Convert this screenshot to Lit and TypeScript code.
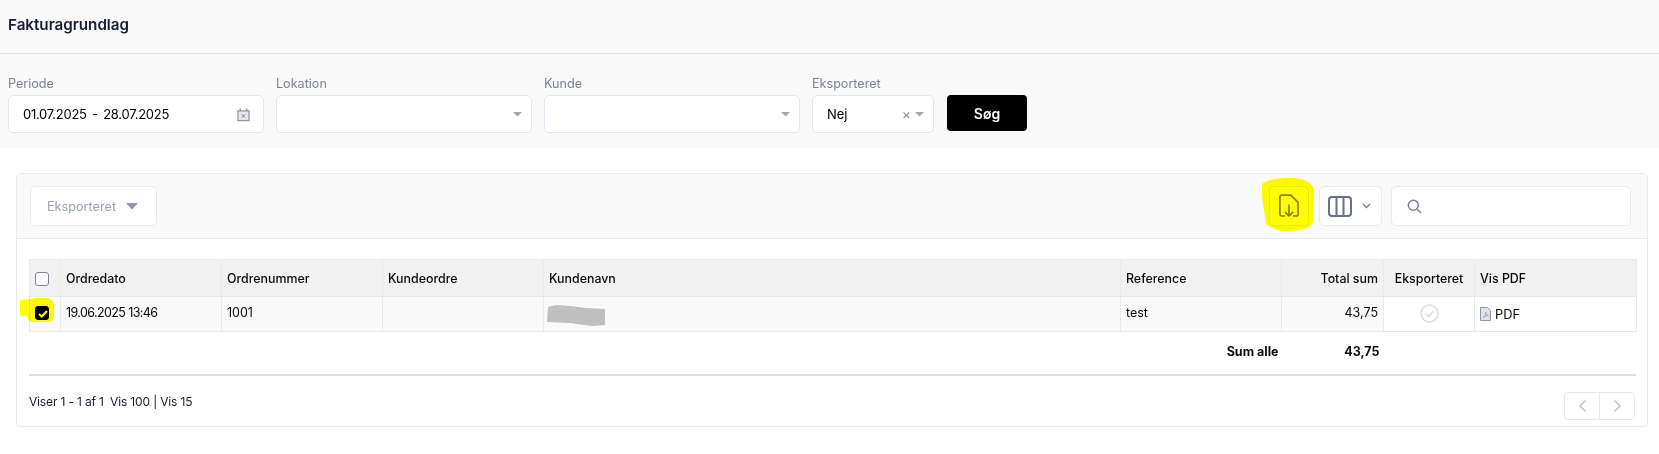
import { LitElement, html, css } from "lit";
import { customElement } from "lit/decorators.js";

const caret = html`<svg class="caret" width="9" height="5" viewBox="0 0 10 6" preserveAspectRatio="none"><path d="M0 0h10L5 5.500z" fill="currentColor"/></svg>`;

@customElement("app-root")
export class AppRoot extends LitElement {
  static styles = css`
    :host { display: block; position: relative; width: 1659px; height: 454px; overflow: hidden; background: #fff;
      font-family: Inter, "Liberation Sans", sans-serif; font-size: 13px; color: #0a0a0a; }
    * { box-sizing: border-box; }
    .top { background: #f9f9f9; height: 148px; }
    .titlebar { height: 54px; border-bottom: 1px solid #e3e3e3; padding: 15px 8px 0; font-size: 15.200px; line-height: 20px; font-weight: 600; color: #181c32; }
    .filters { display: flex; padding: 22px 0 0 8px; align-items: flex-end; }
    .field { display: flex; flex-direction: column; margin-right: 12px; }
    .field label { font-size: 12.600px; line-height: 16px; color: #7e8299; margin-bottom: 3px; }
    .input { height: 38px; background: #fff; border: 1px solid #e4e6ef; border-radius: 5px; display: flex; align-items: center; padding: 0 9px 0 14px; color: #000; }
    .w1 { width: 256px; } .w2 { width: 122px; }
    .grow { flex: 1; }
    .caret { color: #a1a5b7; display: block; }
    .input .caret { color: #a8a8a8; }
    .x { color: #8f94a8; font-size: 14px; margin-right: 4px; line-height: 1; }
    .date { word-spacing: 2px; letter-spacing: -0.260px; font-size: 13px; }
    .search { width: 80px; height: 36px; margin: 0 0 2px 13px; background: #000; color: #fff; border: 0; border-radius: 4px; font: 600 14px Inter, sans-serif; }
    .card { margin: 25px 11px 0 16px; height: 254px; border: 1px solid #e9e9e9; border-radius: 4px; background: #fff; }
    .toolbar { height: 65px; background: #f9f9f9; border-bottom: 1px solid #e9e9e9; display: flex; align-items: center; padding: 0 16px 0 13px; }
    .btn { height: 40px; background: #fff; border: 1px solid #e9e9e9; border-radius: 5px; display: flex; align-items: center; justify-content: center; }
    .exp { width: 127px; color: #99a1b7; gap: 10px; font-size: 12.700px; padding-right: 2px; }
    .exp .caret { width: 12px; height: 7px; color: #8d93a8; }
    .dl { width: 40px; margin-left: auto; }
    .cols { width: 63px; margin-left: 10px; gap: 10px; padding-right: 2px; }
    .find { width: 240px; margin-left: 9px; justify-content: flex-start; padding-left: 15px; }
    .body { padding: 20px 12px 0 12px; }
    table { border-collapse: collapse; table-layout: fixed; width: 1607px; }
    th { background: #f1f1f1; font-weight: 500; text-align: left; height: 37px; padding: 0 5px; border: 1px solid #e9e9e9; font-size: 12.400px; }
    td { height: 35px; padding: 0 5px 3px; border: 1px solid #e9e9e9; background: #f9f9f9; font-size: 12.500px; }
    .plain { background: #fff; }
    .r { text-align: right; padding-right: 5px; }
    th.cb { padding: 0 6px 0 0; text-align: center; }
    td.cb { padding: 0 6px 3px 0; text-align: center; }
    .dt { letter-spacing: -0.600px; }
    .box { display: inline-block; vertical-align: middle; width: 14px; height: 14px; border: 1px solid #7e8299; border-radius: 3px; background: #fff; }
    .box.on { background: #000; border-color: #000; position: relative; }
    .box.on svg { position: absolute; left: 2px; top: 3px; }
    .ok { display: block; margin: 2px auto 0; }
    .pdf { display: flex; align-items: center; gap: 4px; padding-top: 3px; font-size: 12.800px; }
    .sum td { border: 0; background: #fff; height: 42px; padding-bottom: 2px; font-weight: 700; font-size: 12.500px; }
    .sum td.r { padding-right: 4px; }
    .sum td.sl { padding-right: 3px; }
    .rule { height: 2px; background: #dedede; width: 1607px; }
    .foot { display: flex; justify-content: space-between; padding-top: 16px; }
    .info { font-size: 12px; letter-spacing: -0.160px; padding-top: 2px; color: #181c32; }
    .pager { width: 71px; height: 28px; border: 1px solid #e9e9e9; border-radius: 4px; display: flex; }
    .pager span { flex: 1; display: flex; align-items: center; justify-content: center; }
    .pager span + span { border-left: 1px solid #e9e9e9; }
    .marks { position: absolute; left: 0; top: 0; width: 1659px; height: 454px; mix-blend-mode: multiply; pointer-events: none; }
    .redact { position: absolute; left: 0; top: 0; pointer-events: none; }
    .cal { margin-right: 4px; }
  `;

  render() {
    return html`
      <div class="top">
        <div class="titlebar">Fakturagrundlag</div>
        <div class="filters">
          <div class="field"><label>Periode</label>
            <div class="input w1"><span class="date grow">01.07.2025 - 28.07.2025</span>
              <svg class="cal" width="13" height="15" viewBox="0 0 14 15"><path d="M1 3.500h12v10.500H1z" fill="#e6e7ee" stroke="#8f94a8" stroke-width="1.300"/><path d="M3.500 1v3M10.500 1v3" stroke="#8f94a8" stroke-width="1.400"/><path d="M5.200 7.200l3.600 3.600M8.800 7.200l-3.600 3.600" stroke="#6f7489" stroke-width="1"/></svg></div></div>
          <div class="field"><label>Lokation</label><div class="input w1"><span class="grow"></span>${caret}</div></div>
          <div class="field"><label>Kunde</label><div class="input w1"><span class="grow"></span>${caret}</div></div>
          <div class="field" style="margin-right:0"><label>Eksporteret</label><div class="input w2"><span class="grow">Nej</span><span class="x">×</span>${caret}</div></div>
          <button class="search">Søg</button>
        </div>
      </div>
      <div class="card">
        <div class="toolbar">
          <div class="btn exp">Eksporteret ${caret}</div>
          <div class="btn dl"><svg width="20" height="24" viewBox="0 0 22 26" fill="none" stroke="#7f7f10" stroke-width="1.800" stroke-linejoin="round" stroke-linecap="round"><path d="M6 24H3a2 2 0 0 1-2-2V3a2 2 0 0 1 2-2h10l8 8v13a2 2 0 0 1-2 2h-3"/><path d="M11 12v12M7 20l4 4 4-4"/></svg></div>
          <div class="btn cols"><svg width="24" height="21" viewBox="0 0 24 21" fill="none" stroke="#6b7086" stroke-width="2"><rect x="1" y="1" width="22" height="19" rx="3"/><path d="M8.500 1v19M15.500 1v19"/></svg><svg width="9" height="6" viewBox="0 0 9 6" fill="none" stroke="#7e8299" stroke-width="1.400"><path d="M1 1l3.500 3.500L8 1"/></svg></div>
          <div class="btn find"><svg width="15" height="15" viewBox="0 0 15 15" fill="none" stroke="#7e8299" stroke-width="1.500"><circle cx="6.300" cy="6.300" r="5"/><path d="M10 10l4 4"/></svg></div>
        </div>
        <div class="body">
          <table>
            <colgroup><col style="width:31px"/><col style="width:161px"/><col style="width:161px"/><col style="width:161px"/><col style="width:577px"/><col style="width:161px"/><col style="width:102px"/><col style="width:91px"/><col style="width:162px"/></colgroup>
            <tr><th class="cb"><span class="box"></span></th><th>Ordredato</th><th>Ordrenummer</th><th>Kundeordre</th><th>Kundenavn</th><th>Reference</th><th class="r">Total sum</th><th style="text-align:center">Eksporteret</th><th>Vis PDF</th></tr>
            <tr><td class="cb"><span class="box on"><svg width="10" height="8" viewBox="0 0 10 8" fill="none" stroke="#ffff30" stroke-width="2"><path d="M1 4l2.700 2.500L9 1"/></svg></span></td><td class="dt">19.06.2025 13:46</td><td>1001</td><td></td><td></td><td>test</td><td class="r">43,75</td><td class="plain"><svg class="ok" width="19" height="19" viewBox="0 0 18 18" fill="none" stroke="#dcdcdc" stroke-width="1.500"><circle cx="9" cy="9" r="8"/><path d="M5.500 9.200l2.600 2.600 4.600-5"/></svg></td><td class="plain"><span class="pdf"><svg width="11" height="14" viewBox="0 0 11 14" fill="#dfe0e8" stroke="#8f94a8" stroke-width="1"><path d="M.5.5h7l3 3v10H.5z"/><path d="M3 11c2-1 3-4 2.500-6 .5 2 1.500 3 3 3.500-2-.2-4 .800-5.500 2.500z" fill="none" stroke-width=".7"/></svg>PDF</span></td></tr>
            <tr class="sum"><td></td><td></td><td></td><td></td><td></td><td class="r sl">Sum alle</td><td class="r">43,75</td><td></td><td></td></tr>
          </table>
          <div class="rule"></div>
          <div class="foot">
            <div class="info">Viser 1 - 1 af 1 &nbsp;Vis 100 | Vis 15</div>
            <div class="pager"><span><svg width="9" height="14" viewBox="0 0 9 14" fill="none" stroke="#c8c8c8" stroke-width="1.600"><path d="M7.500 1.500L2 7l5.500 5.500"/></svg></span><span><svg width="9" height="14" viewBox="0 0 9 14" fill="none" stroke="#c8c8c8" stroke-width="1.600"><path d="M1.500 1.500L7 7l-5.500 5.500"/></svg></span></div>
          </div>
        </div>
      </div>
      <svg class="redact" width="1659" height="454"><path d="M548 307c6-2 10-2 22-1l16 2 19 1v16l-12 1c-12-1-20-3-25-3l-21-1z" fill="#bfbfbf"/></svg>
      <svg class="marks" viewBox="0 0 1659 454"><path d="M1262 184c6-5 18-6 30-6 12 0 20 4 22 12l-1 32c-2 7-16 9-27 9-8 0-17-3-20-8l-4-26z" fill="#ffff00"/><path d="M20 300l12-1 3-1h14c3 2 5 4 5 7v13c-1 3-4 4-7 4h-14c-3 0-5-2-6-6l-7-1z" fill="#ffff00"/></svg>
    `;
  }
}
